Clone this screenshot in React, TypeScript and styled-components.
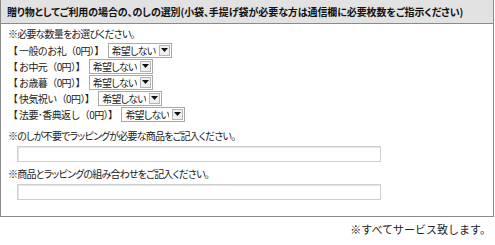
import { FunctionComponent } from "react";
import styled, { createGlobalStyle } from "styled-components";

const GlobalStyle = createGlobalStyle`
    body {
        margin: 0;
        background: #ffffff;
        color: #222222;
        font-family: "Noto Sans CJK JP", "Noto Sans", sans-serif;
    }
`;

const Page = styled.div`
    width: 495px;
    font-size: 10px;
    letter-spacing: -0.8px;
    font-feature-settings: "palt";
`;

const Panel = styled.div`
    width: 492px;
    border: 1px solid #8a8a8a;
    border-top: none;
`;

const PanelHeader = styled.div`
    height: 23px;
    display: flex;
    align-items: center;
    padding-left: 6px;
    background-color: #e2e2e2;
    border-bottom: 1px solid #8a8a8a;
    font-weight: bold;
    font-size: 10px;
    letter-spacing: -0.1px;
    white-space: nowrap;
    color: #111111;
`;

const PanelBody = styled.div`
    padding: 2px 6px 16px 7px;
`;

const Note = styled.div<{ gap?: number }>`
    line-height: 15px;
    margin-top: ${(props) => props.gap ?? 0}px;
`;

const ItemList = styled.div`
    display: flex;
    flex-direction: column;
    margin-top: 1px;
`;

const ItemRow = styled.div`
    height: 16px;
    display: flex;
    align-items: center;
    gap: 4px;
`;

const ItemLabel = styled.span`
    white-space: nowrap;
    font-feature-settings: normal;
    letter-spacing: -0.6px;
`;

const SelectBox = styled.div`
    height: 15px;
    display: flex;
    align-items: center;
    border: 1px solid #a9a9a9;
    box-sizing: border-box;
    background: #ffffff;

    select {
        appearance: none;
        border: none;
        outline: none;
        background: transparent;
        font: inherit;
        letter-spacing: -0.8px;
        color: #222222;
        padding: 0 3px 0 3px;
        height: 13px;
        line-height: 13px;
    }
`;

const ArrowButton = styled.span`
    width: 11px;
    height: 11px;
    margin-right: 1px;
    display: flex;
    align-items: center;
    justify-content: center;
    border: 1px solid #b5b5b5;
    box-sizing: border-box;
    background: #f0f0f0;
`;

const TextField = styled.input`
    display: block;
    width: 364px;
    height: 16px;
    margin: 3px 0 0 9px;
    box-sizing: border-box;
    border: 1px solid #cfcfcf;
    box-shadow: inset 1px 1px 0 #e6e6e6;
    outline: none;
    padding: 0 3px;
`;

const Footer = styled.div`
    text-align: right;
    padding: 4px 4px 0 0;
    font-family: "Liberation Serif", "Noto Sans CJK JP", serif;
    font-size: 11px;
    letter-spacing: 0;
    font-feature-settings: normal;
    color: #222222;
`;

const items = ["一般のお礼", "お中元", "お歳暮", "快気祝い", "法要･香典返し"];

const Dropdown: FunctionComponent = () => (
    <SelectBox>
        <select defaultValue="none">
            <option value="none">希望しない</option>
            <option value="yes">希望する</option>
        </select>
        <ArrowButton>
            <svg width="7" height="4" viewBox="0 0 7 4">
                <path d="M0 0 H7 L3.5 4 Z" fill="#111111" />
            </svg>
        </ArrowButton>
    </SelectBox>
);

const App: FunctionComponent = () => (
    <Page>
        <GlobalStyle />
        <Panel>
            <PanelHeader>
                贈り物としてご利用の場合の、のしの選別(小袋、手提げ袋が必要な方は通信欄に必要枚数をご指示ください)
            </PanelHeader>
            <PanelBody>
                <Note>※必要な数量をお選びください。</Note>
                <ItemList>
                    {items.map((item) => (
                        <ItemRow key={item}>
                            <ItemLabel>【 {item}（0円）】</ItemLabel>
                            <Dropdown />
                        </ItemRow>
                    ))}
                </ItemList>
                <Note gap={6}>※のしが不要でラッピングが必要な商品をご記入ください。</Note>
                <TextField type="text" />
                <Note gap={4}>※商品とラッピングの組み合わせをご記入ください。</Note>
                <TextField type="text" />
            </PanelBody>
        </Panel>
        <Footer>※すべてサービス致します。</Footer>
    </Page>
);

export default App;
